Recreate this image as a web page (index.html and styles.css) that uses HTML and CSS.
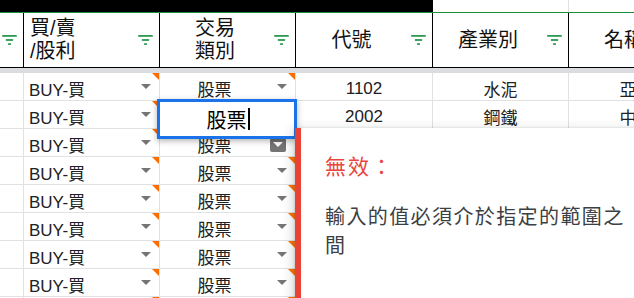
FILE: index.html
```html
<!DOCTYPE html>
<html lang="zh-Hant">
<head>
    <meta charset="UTF-8" />
    <meta name="viewport" content="width=device-width, initial-scale=1.0" />
    <title>交易紀錄</title>
    <link rel="stylesheet" href="styles.css">
</head>
<body>
    <div class="sheet">
        <div class="colbar">
            <div class="colbar-dark"></div>
            <div class="colbar-light"></div>
        </div>

        <div class="row head">
            <div class="cell hcell"><svg class="filter" viewBox="0 0 16 11"><rect x="0" y="0" width="16" height="2"/><rect x="4" y="4.5" width="8" height="2"/><rect x="6.5" y="9" width="3" height="2"/></svg></div>
            <div class="cell hcell"><span class="htext left">買/賣<br>/股利</span><svg class="filter" viewBox="0 0 16 11"><rect x="0" y="0" width="16" height="2"/><rect x="4" y="4.5" width="8" height="2"/><rect x="6.5" y="9" width="3" height="2"/></svg></div>
            <div class="cell hcell"><span class="htext">交易<br>類別</span><svg class="filter" viewBox="0 0 16 11"><rect x="0" y="0" width="16" height="2"/><rect x="4" y="4.5" width="8" height="2"/><rect x="6.5" y="9" width="3" height="2"/></svg></div>
            <div class="cell hcell"><span class="htext">代號</span><svg class="filter" viewBox="0 0 16 11"><rect x="0" y="0" width="16" height="2"/><rect x="4" y="4.5" width="8" height="2"/><rect x="6.5" y="9" width="3" height="2"/></svg></div>
            <div class="cell hcell"><span class="htext">產業別</span><svg class="filter" viewBox="0 0 16 11"><rect x="0" y="0" width="16" height="2"/><rect x="4" y="4.5" width="8" height="2"/><rect x="6.5" y="9" width="3" height="2"/></svg></div>
            <div class="cell hcell"><span class="htext">名稱</span><svg class="filter" viewBox="0 0 16 11"><rect x="0" y="0" width="16" height="2"/><rect x="4" y="4.5" width="8" height="2"/><rect x="6.5" y="9" width="3" height="2"/></svg></div>
        </div>

        <div class="freeze"></div>

        <div class="row">
            <div class="cell"></div>
            <div class="cell drop warn left">BUY-買</div>
            <div class="cell drop warn">股票</div>
            <div class="cell">1102</div>
            <div class="cell">水泥</div>
            <div class="cell">亞泥</div>
        </div>
        <div class="row">
            <div class="cell"></div>
            <div class="cell drop warn left">BUY-買</div>
            <div class="cell drop warn">股票</div>
            <div class="cell">2002</div>
            <div class="cell">鋼鐵</div>
            <div class="cell">中鋼</div>
        </div>
        <div class="row">
            <div class="cell"></div>
            <div class="cell drop warn left">BUY-買</div>
            <div class="cell pad">股票</div>
            <div class="cell"></div>
            <div class="cell"></div>
            <div class="cell"></div>
        </div>
        <div class="row">
            <div class="cell"></div>
            <div class="cell drop warn left">BUY-買</div>
            <div class="cell drop warn">股票</div>
            <div class="cell"></div>
            <div class="cell"></div>
            <div class="cell"></div>
        </div>
        <div class="row">
            <div class="cell"></div>
            <div class="cell drop warn left">BUY-買</div>
            <div class="cell drop warn">股票</div>
            <div class="cell"></div>
            <div class="cell"></div>
            <div class="cell"></div>
        </div>
        <div class="row">
            <div class="cell"></div>
            <div class="cell drop warn left">BUY-買</div>
            <div class="cell drop warn">股票</div>
            <div class="cell"></div>
            <div class="cell"></div>
            <div class="cell"></div>
        </div>
        <div class="row">
            <div class="cell"></div>
            <div class="cell drop warn left">BUY-買</div>
            <div class="cell drop warn">股票</div>
            <div class="cell"></div>
            <div class="cell"></div>
            <div class="cell"></div>
        </div>
        <div class="row">
            <div class="cell"></div>
            <div class="cell drop warn left">BUY-買</div>
            <div class="cell drop warn">股票</div>
            <div class="cell"></div>
            <div class="cell"></div>
            <div class="cell"></div>
        </div>
        <div class="row">
            <div class="cell"></div>
            <div class="cell drop warn left">BUY-買</div>
            <div class="cell drop warn">股票</div>
            <div class="cell"></div>
            <div class="cell"></div>
            <div class="cell"></div>
        </div>

        <div class="editor"><span>股票</span><span class="caret"></span></div>
        <div class="chip"></div>

        <div class="popup">
            <div class="popup-title">無效：</div>
            <div class="popup-body">輸入的值必須介於指定的範圍之間</div>
        </div>
    </div>
</body>
</html>
```

FILE: styles.css
```css
body {
    margin: 0;
    padding: 0;
    background: #fff;
    font-family: "Liberation Sans", "Noto Sans CJK TC", sans-serif;
    color: #202124;
    overflow: hidden;
}

.sheet {
    position: relative;
    width: 634px;
    height: 298px;
    overflow: hidden;
}

.colbar {
    display: flex;
    height: 12px;
    border-bottom: 1px solid #1e8e3e;
}

.colbar-dark {
    width: 433px;
    background: #000;
}

.colbar-light {
    width: 135px;
    border-right: 1px solid #e1e1e1;
}

.row {
    display: grid;
    grid-template-columns: 24px 136px 136px 137px 136px 136px;
    height: 28px;
    border-bottom: 1px solid #e1e1e1;
    box-sizing: border-box;
}

.cell {
    position: relative;
    box-sizing: border-box;
    border-right: 1px solid #e1e1e1;
    display: flex;
    align-items: center;
    justify-content: center;
    padding-top: 3px;
    font-size: 17px;
    white-space: nowrap;
}

    .cell.drop, .cell.pad {
        padding-right: 26px;
    }

    .cell.left {
        justify-content: flex-start;
        padding-left: 5px;
    }

    .cell.drop::after {
        content: "";
        position: absolute;
        right: 8px;
        top: 11px;
        border-left: 5px solid transparent;
        border-right: 5px solid transparent;
        border-top: 5px solid #757575;
    }

    .cell.warn::before {
        content: "";
        position: absolute;
        right: 0;
        top: 0;
        border-left: 7px solid transparent;
        border-top: 7px solid #ff6d01;
    }

.row.head {
    height: 55px;
    border-bottom: 1px solid #000;
}

.hcell {
    border-right: 1px solid #000;
    padding-top: 0;
    font-size: 20px;
    color: #111;
    justify-content: flex-end;
}

.htext {
    flex: 1;
    text-align: center;
    line-height: 23px;
}

    .htext.left {
        text-align: left;
        padding-left: 6px;
    }

.filter {
    width: 15px;
    height: 10px;
    margin: 0 6px 0 4px;
    fill: #2e9a52;
    flex-shrink: 0;
}

.freeze {
    height: 5px;
    background: #dadce0;
}

.editor {
    position: absolute;
    left: 157px;
    top: 99px;
    width: 140px;
    height: 40px;
    box-sizing: border-box;
    border: 3px solid #1a73e8;
    background: #fff;
    box-shadow: 0 2px 6px rgba(0, 0, 0, 0.3);
    display: flex;
    align-items: center;
    justify-content: center;
    padding-left: 2px;
    font-size: 20px;
    color: #000;
    z-index: 2;
}

.caret {
    display: inline-block;
    width: 2px;
    height: 22px;
    margin-left: 1px;
    background: #000;
}

.chip {
    position: absolute;
    left: 270px;
    top: 138px;
    width: 16px;
    height: 14px;
    border-radius: 2px;
    background: #757575;
    z-index: 1;
}

    .chip::after {
        content: "";
        position: absolute;
        left: 3px;
        top: 4px;
        border-left: 5px solid transparent;
        border-right: 5px solid transparent;
        border-top: 5px solid #fff;
    }

.popup {
    position: absolute;
    left: 295px;
    top: 128px;
    width: 420px;
    height: 220px;
    box-sizing: border-box;
    border-left: 6px solid #ea4335;
    background: #fff;
    box-shadow: 0 1px 3px rgba(60, 64, 67, 0.3), 0 4px 10px 3px rgba(60, 64, 67, 0.18);
    padding: 25px 0 0 24px;
    z-index: 3;
}

.popup-title {
    font-size: 21px;
    line-height: 28px;
    letter-spacing: 2px;
    color: #e8453c;
}

.popup-body {
    margin-top: 22px;
    width: 310px;
    font-size: 20px;
    line-height: 29px;
    letter-spacing: 1.4px;
    color: #3c4043;
}
```
